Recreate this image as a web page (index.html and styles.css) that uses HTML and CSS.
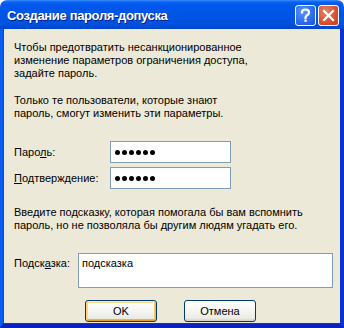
FILE: index.html
```html
<!DOCTYPE html>
<html lang="ru">
<head>
<meta charset="utf-8">
<link rel="stylesheet" href="styles.css">
</head>
<body>
<div class="window">
  <div class="titlebar">
    <span class="title">Создание пароля-допуска</span>
    <div class="tbuttons">
      <div class="tbtn help">
        <svg width="21" height="21" viewBox="0 0 21 21">
          <path d="M7 7.5 Q7 4.5 10.5 4.5 Q14 4.5 14 7.5 Q14 9.2 12 10.3 Q10.5 11.1 10.5 12.8" fill="none" stroke="#fff" stroke-width="2.2" stroke-linecap="square"/>
          <rect x="9.4" y="14.6" width="2.3" height="2.3" fill="#fff"/>
        </svg>
      </div>
      <div class="tbtn close">
        <svg width="21" height="21" viewBox="0 0 21 21">
          <path d="M6 6 L15 15 M15 6 L6 15" stroke="#fff" stroke-width="2.2" stroke-linecap="square"/>
        </svg>
      </div>
    </div>
  </div>
  <div class="client">
    <p class="para">Чтобы предотвратить несанкционированное<br>изменение параметров ограничения доступа,<br>задайте пароль.</p>
    <p class="para p2">Только те пользователи, которые знают<br>пароль, смогут изменить эти параметры.</p>
    <div class="fields">
      <div class="row">
        <label class="lbl">Паро<u>л</u>ь:</label>
        <div class="field"><span class="dot"></span><span class="dot"></span><span class="dot"></span><span class="dot"></span><span class="dot"></span><span class="dot"></span></div>
      </div>
      <div class="row">
        <label class="lbl"><u>П</u>одтверждение:</label>
        <div class="field"><span class="dot"></span><span class="dot"></span><span class="dot"></span><span class="dot"></span><span class="dot"></span><span class="dot"></span></div>
      </div>
    </div>
    <p class="para p3">Введите подсказку, которая помогала бы вам вспомнить<br>пароль, но не позволяла бы другим людям угадать его.</p>
    <div class="hintrow">
      <label class="hlbl">Подск<u>а</u>зка:</label>
      <div class="hint">подсказка</div>
    </div>
    <div class="buttons">
      <div class="btn default">OK</div>
      <div class="btn">Отмена</div>
    </div>
  </div>
</div>
</body>
</html>
```

FILE: styles.css
```css
html, body {
  margin: 0;
  padding: 0;
  background: #ffffff;
}
.window {
  width: 344px;
  height: 328px;
  display: flex;
  flex-direction: column;
  font-family: "Liberation Sans", Arial, sans-serif;
  font-size: 11px;
  color: #000;
}
.titlebar {
  height: 29px;
  flex: none;
  display: flex;
  align-items: center;
  justify-content: space-between;
  padding: 0 5px 0 7px;
  border-radius: 7px 7px 0 0;
  background: linear-gradient(to bottom, #3c8dfc 0px, #0a62f2 2px, #0058ee 5px, #0055e5 14px, #0052e0 24px, #0044cc 29px);
}
.title {
  color: #fff;
  font-weight: bold;
  font-size: 13px;
  letter-spacing: -0.35px;
  text-shadow: 1px 1px 0 #0a1e8c;
  margin-top: 1px;
}
.tbuttons {
  display: flex;
  gap: 2px;
  margin-top: 2px;
}
.tbtn {
  width: 21px;
  height: 21px;
  box-sizing: border-box;
  border: 1px solid #fff;
  border-radius: 3px;
  display: flex;
  align-items: center;
  justify-content: center;
  overflow: hidden;
}
.tbtn svg {
  flex: none;
}
.help {
  background: radial-gradient(circle at 35% 30%, #5e96f8 0%, #2f6ef0 55%, #1e50d8 100%);
}
.close {
  background: radial-gradient(circle at 35% 30%, #e9846a 0%, #da5230 55%, #c4401e 100%);
}
.client {
  flex: 1;
  background: #ece9d8;
  border-left: 3px solid #0a5cf0;
  border-right: 4px solid #0a32d0;
  border-bottom: 4px solid #0a22c0;
  box-shadow: inset 1px 0 0 #0446d6, inset 0 -1px 0 #0038d0;
  padding: 12px 7px 0 11px;
  display: flex;
  flex-direction: column;
}
.para {
  margin: 0;
  line-height: 13px;
}
.p2 {
  margin-top: 14px;
}
.fields {
  margin-top: 21px;
  display: flex;
  flex-direction: column;
  gap: 4px;
}
.row {
  display: flex;
  align-items: center;
  height: 22px;
}
.lbl {
  width: 96px;
  flex: none;
  line-height: 13px;
}
.field {
  width: 121px;
  height: 22px;
  box-sizing: border-box;
  border: 1px solid #7f9db9;
  background: #fff;
  display: flex;
  align-items: center;
  gap: 2px;
  padding-left: 4px;
}
.dot {
  width: 5px;
  height: 5px;
  border-radius: 50%;
  background: #000;
}
.p3 {
  margin-top: 17px;
}
.hintrow {
  margin-top: 21px;
  display: flex;
  align-items: flex-start;
}
.hlbl {
  width: 64px;
  flex: none;
  line-height: 13px;
  margin-top: 4px;
}
.hint {
  flex: 1;
  height: 35px;
  box-sizing: border-box;
  border: 1px solid #7f9db9;
  background: #fff;
  padding: 3px 0 0 3px;
  line-height: 13px;
}
.buttons {
  margin-top: 12px;
  display: flex;
  justify-content: center;
  gap: 27px;
  padding-right: 6px;
}
.btn {
  width: 72px;
  height: 22px;
  box-sizing: border-box;
  border: 1px solid #003c74;
  border-radius: 3px;
  background: linear-gradient(to bottom, #ffffff 0%, #f7f7f4 40%, #ecebe6 85%, #d6d0c5 100%);
  display: flex;
  align-items: center;
  justify-content: center;
  line-height: 13px;
}
.default {
  box-shadow: inset 0 1px 0 #ffe7a2, inset 1px 0 0 #fbd37a, inset -1px 0 0 #f4b53a, inset 0 -1px 0 #e5a01a, inset 0 2px 0 #fcdc8e, inset 2px 0 0 #fad58a, inset -2px 0 0 #f9c760, inset 0 -2px 0 #f0b33c;
}
u {
  text-decoration: underline;
  text-underline-offset: 1px;
}
```
